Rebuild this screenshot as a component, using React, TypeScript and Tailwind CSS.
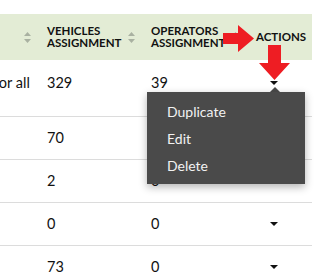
import React from 'react'

function SortIcon() {
  return (
    <svg width="7" height="11" viewBox="0 0 7 11" className="shrink-0">
      <polygon points="0,4 3.5,0 7,4" fill="#a9b1a1" />
      <polygon points="0,7 3.5,11 7,7" fill="#a9b1a1" />
    </svg>
  )
}

function Caret() {
  return <div className="w-0 h-0 border-l-[4px] border-r-[4px] border-t-[4px] border-l-transparent border-r-transparent border-t-[#111]" />
}

const rows = [
  { first: 'for all', v: '329', o: '39' },
  { first: '', v: '70', o: '0' },
  { first: '', v: '2', o: '0' },
  { first: '', v: '0', o: '0' },
  { first: '', v: '73', o: '0' },
]

export default function App() {
  return (
    <div className="relative w-[322px] h-[277px] overflow-hidden bg-white text-[#111]" style={{ fontFamily: 'Lato, "Open Sans", sans-serif' }}>
      <div className="h-[14px]" />
      {/* header */}
      <div className="flex items-center w-[312px] h-[46px] bg-[#e3ecd5] text-[11.5px] font-bold leading-[12.5px] uppercase">
        <div className="w-[47px] pl-[24px] flex">
          <SortIcon />
        </div>
        <div className="w-[104px] flex items-center gap-[7px]">
          <div>Vehicles<br />Assignment</div>
          <SortIcon />
        </div>
        <div className="w-[105px] flex items-center gap-[7px]">
          <div>Operators<br />Assignment</div>
          <SortIcon />
        </div>
        <div className="flex-1">Actions</div>
      </div>

      {/* rows */}
      {rows.map((r, i) => (
        <div
          key={i}
          className={`flex w-[312px] border-b border-[#dcdcdc] text-[14.5px] leading-[20px] ${i === 0 ? 'h-[57px] items-start pt-[13px]' : 'h-[43px] items-center'}`}
        >
          <div className="w-[47px] whitespace-nowrap">
            <span className="ml-[-6px]">{r.first}</span>
          </div>
          <div className="w-[104px]">{r.v}</div>
          <div className="w-[105px]">{r.o}</div>
          <div className="flex-1 pl-[14px] flex items-center h-[20px]">
            <Caret />
          </div>
        </div>
      ))}

      {/* dropdown menu */}
      <div className="absolute left-[270px] top-[87px] w-0 h-0 border-l-[5px] border-r-[5px] border-b-[5px] border-l-transparent border-r-transparent border-b-[#4a4a4a]" />
      <div className="absolute left-[147px] top-[92px] w-[158px] h-[92px] bg-[#4a4a4a] shadow-[0_3px_8px_rgba(0,0,0,0.3)] pt-[6px] text-[#f2f2f2] text-[14px]">
        <div className="h-[27px] flex items-center pl-[20px]">Duplicate</div>
        <div className="h-[27px] flex items-center pl-[20px]">Edit</div>
        <div className="h-[27px] flex items-center pl-[20px]">Delete</div>
      </div>

      {/* red annotation arrows */}
      <svg className="absolute left-0 top-0" width="322" height="277" viewBox="0 0 322 277">
        <polygon points="223,33 238,33 238,25 254,38.5 238,52 238,44 223,44" fill="#ee1d23" />
        <polygon points="268,45 281,45 281,63 290,63 274.5,80 259,63 268,63" fill="#ee1d23" />
      </svg>
    </div>
  )
}
